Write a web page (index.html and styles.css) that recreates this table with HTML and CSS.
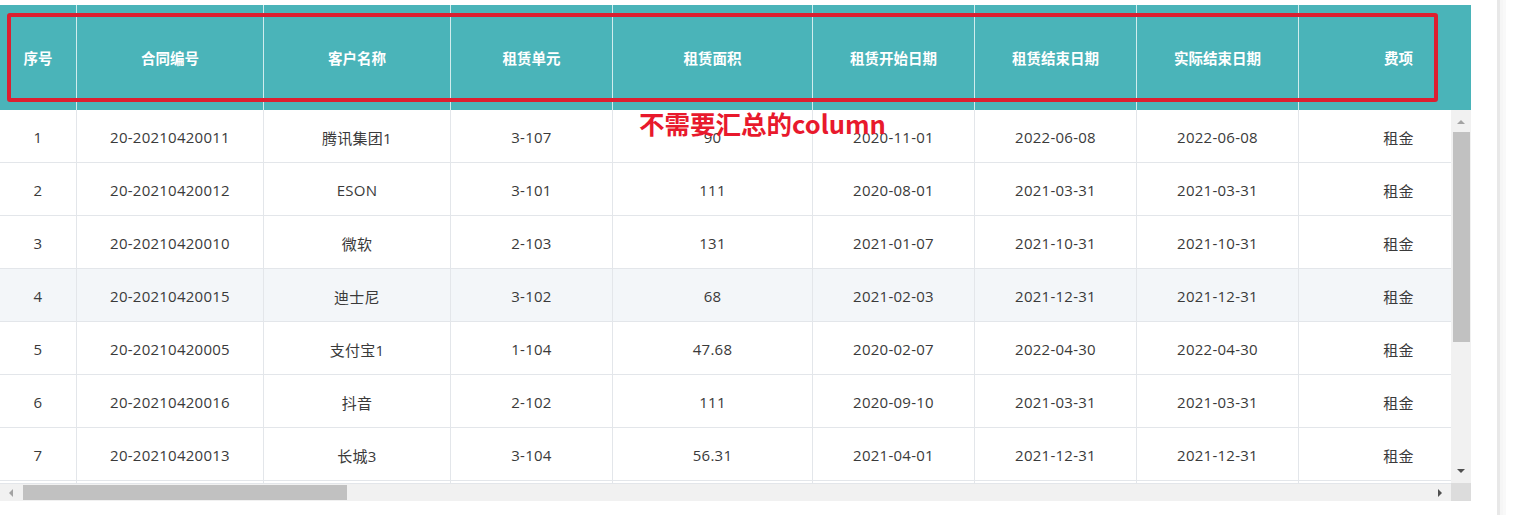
FILE: index.html
```html
<!DOCTYPE html>
<html lang="zh">
<head>
<meta charset="utf-8">
<title>租赁合同</title>
<link rel="stylesheet" href="styles.css">
</head>
<body>
<div class="page">
  <div class="table-wrap">
    <div class="thead grid">
      <div class="th">序号</div>
      <div class="th">合同编号</div>
      <div class="th">客户名称</div>
      <div class="th">租赁单元</div>
      <div class="th">租赁面积</div>
      <div class="th">租赁开始日期</div>
      <div class="th">租赁结束日期</div>
      <div class="th">实际结束日期</div>
      <div class="th">费项</div>
    </div>
    <div class="body-area">
      <div class="viewport">
        <div class="row grid"><div class="td">1</div><div class="td">20-20210420011</div><div class="td">腾讯集团1</div><div class="td">3-107</div><div class="td">90</div><div class="td">2020-11-01</div><div class="td">2022-06-08</div><div class="td">2022-06-08</div><div class="td">租金</div></div>
        <div class="row grid"><div class="td">2</div><div class="td">20-20210420012</div><div class="td">ESON</div><div class="td">3-101</div><div class="td">111</div><div class="td">2020-08-01</div><div class="td">2021-03-31</div><div class="td">2021-03-31</div><div class="td">租金</div></div>
        <div class="row grid"><div class="td">3</div><div class="td">20-20210420010</div><div class="td">微软</div><div class="td">2-103</div><div class="td">131</div><div class="td">2021-01-07</div><div class="td">2021-10-31</div><div class="td">2021-10-31</div><div class="td">租金</div></div>
        <div class="row grid hover"><div class="td">4</div><div class="td">20-20210420015</div><div class="td">迪士尼</div><div class="td">3-102</div><div class="td">68</div><div class="td">2021-02-03</div><div class="td">2021-12-31</div><div class="td">2021-12-31</div><div class="td">租金</div></div>
        <div class="row grid"><div class="td">5</div><div class="td">20-20210420005</div><div class="td">支付宝1</div><div class="td">1-104</div><div class="td">47.68</div><div class="td">2020-02-07</div><div class="td">2022-04-30</div><div class="td">2022-04-30</div><div class="td">租金</div></div>
        <div class="row grid"><div class="td">6</div><div class="td">20-20210420016</div><div class="td">抖音</div><div class="td">2-102</div><div class="td">111</div><div class="td">2020-09-10</div><div class="td">2021-03-31</div><div class="td">2021-03-31</div><div class="td">租金</div></div>
        <div class="row grid"><div class="td">7</div><div class="td">20-20210420013</div><div class="td">长城3</div><div class="td">3-104</div><div class="td">56.31</div><div class="td">2021-04-01</div><div class="td">2021-12-31</div><div class="td">2021-12-31</div><div class="td">租金</div></div>
        <div class="row grid"><div class="td"></div><div class="td"></div><div class="td"></div><div class="td"></div><div class="td"></div><div class="td"></div><div class="td"></div><div class="td"></div><div class="td"></div></div>
      </div>
      <div class="vscroll">
        <div class="arrow-up"></div>
        <div class="vthumb"></div>
        <div class="vspace"></div>
        <div class="arrow-down"></div>
      </div>
    </div>
    <div class="bottom-area">
      <div class="hscroll">
        <div class="arrow-left"></div>
        <div class="hthumb"></div>
        <div class="hspace"></div>
        <div class="arrow-right"></div>
      </div>
      <div class="corner"></div>
    </div>
    <div class="mark-box"></div>
    <div class="mark-text">不需要汇总的column</div>
  </div>
  <div class="side-strip"></div>
</div>
</body>
</html>
```

FILE: styles.css
```css
html, body {
  margin: 0;
  padding: 0;
  background: #ffffff;
}

body {
  font-family: "Open Sans", "Noto Sans CJK SC", sans-serif;
  font-size: 15px;
  color: #3a3a3a;
}

.page {
  display: flex;
  padding-top: 5px;
  height: 510px;
}

.table-wrap {
  position: relative;
  width: 1471px;
  flex: none;
}

.grid {
  display: grid;
  grid-template-columns: 77px 187px 187px 162px 200px 162px 162px 162px 200px;
}

.thead {
  height: 105px;
  background: #4ab4b9;
  overflow: hidden;
}

.th {
  box-sizing: border-box;
  border-right: 1px solid rgba(255, 255, 255, 0.75);
  color: #ffffff;
  font-weight: 700;
  font-size: 14.5px;
  display: flex;
  align-items: center;
  justify-content: center;
  white-space: nowrap;
}

.body-area {
  display: flex;
  height: 373px;
}

.viewport {
  width: 1451px;
  height: 373px;
  overflow: hidden;
  flex: none;
}

.row {
  height: 53px;
  box-sizing: border-box;
  border-bottom: 1px solid #e3e6ea;
}

.row.hover {
  background: #f3f6f9;
}

.td {
  box-sizing: border-box;
  border-right: 1px solid #e3e6ea;
  display: flex;
  align-items: center;
  justify-content: center;
  white-space: nowrap;
  letter-spacing: 0.25px;
  padding-top: 2px;
}

.vscroll {
  width: 20px;
  height: 373px;
  background: #f1f1f1;
  display: flex;
  flex-direction: column;
  align-items: center;
}

.arrow-up {
  margin-top: 10px;
  width: 0;
  height: 0;
  border-left: 4px solid transparent;
  border-right: 4px solid transparent;
  border-bottom: 4px solid #a3a3a3;
}

.vthumb {
  margin-top: 8px;
  width: 17px;
  height: 210px;
  background: #c1c1c1;
}

.vspace {
  flex: 1;
}

.arrow-down {
  margin-bottom: 10px;
  width: 0;
  height: 0;
  border-left: 4px solid transparent;
  border-right: 4px solid transparent;
  border-top: 4px solid #505050;
}

.bottom-area {
  display: flex;
  height: 18px;
}

.hscroll {
  width: 1451px;
  height: 18px;
  background: #f1f1f1;
  display: flex;
  align-items: center;
  border-top: 1px solid #e3e6ea;
  box-sizing: border-box;
}

.arrow-left {
  margin-left: 9px;
  width: 0;
  height: 0;
  border-top: 4px solid transparent;
  border-bottom: 4px solid transparent;
  border-right: 4px solid #a3a3a3;
}

.hthumb {
  margin-left: 10px;
  width: 324px;
  height: 15px;
  background: #c1c1c1;
}

.hspace {
  flex: 1;
}

.arrow-right {
  margin-right: 9px;
  width: 0;
  height: 0;
  border-top: 4px solid transparent;
  border-bottom: 4px solid transparent;
  border-left: 4px solid #505050;
}

.corner {
  width: 20px;
  height: 18px;
  background: #dcdcdc;
}

.mark-box {
  position: absolute;
  left: 7px;
  top: 8px;
  width: 1431px;
  height: 89px;
  box-sizing: border-box;
  border: 4px solid #dc1f30;
  border-radius: 3px;
}

.mark-text {
  position: absolute;
  left: 639px;
  top: 103px;
  font-family: "Noto Sans CJK SC", sans-serif;
  font-size: 25.5px;
  font-weight: 700;
  line-height: 1.2;
  color: #e8192c;
  white-space: nowrap;
}

.side-strip {
  margin-left: 26px;
  margin-top: -5px;
  width: 3px;
  height: 515px;
  background: #e8e8e8;
  box-shadow: 3px 0 0 #f6f6f6, 6px 0 0 #f9f9f9;
}
```
